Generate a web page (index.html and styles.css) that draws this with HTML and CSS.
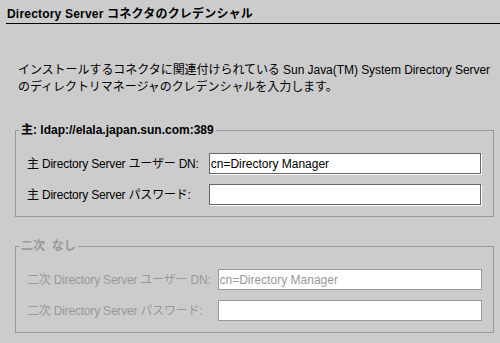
FILE: index.html
```html
<!DOCTYPE html>
<html lang="ja">
<head>
  <meta charset="UTF-8" />
  <title>Directory Server コネクタのクレデンシャル</title>
  <link rel="stylesheet" href="styles.css">
</head>
<body>

  <div class="header">
    <h1>Directory Server コネクタのクレデンシャル</h1>
  </div>

  <p class="intro">インストールするコネクタに関連付けられている Sun Java(TM) System Directory Server<br>のディレクトリマネージャのクレデンシャルを入力します。</p>

  <!-- primary server -->
  <fieldset class="group">
    <legend>主: ldap://elala.japan.sun.com:389</legend>
    <div class="form-grid">
      <label for="primary-dn">主 Directory Server ユーザー DN:</label>
      <input id="primary-dn" type="text" value="cn=Directory Manager">
      <label for="primary-pw">主 Directory Server パスワード:</label>
      <input id="primary-pw" type="password">
    </div>
  </fieldset>

  <!-- secondary server, nothing configured so it is greyed out -->
  <fieldset class="group second" disabled>
    <legend>二次&nbsp; なし</legend>
    <div class="form-grid">
      <label for="second-dn">二次 Directory Server ユーザー DN:</label>
      <input id="second-dn" type="text" value="cn=Directory Manager">
      <label for="second-pw">二次 Directory Server パスワード:</label>
      <input id="second-pw" type="password">
    </div>
  </fieldset>

</body>
</html>
```

FILE: styles.css
```css
body {
  margin: 0;
  background-color: #cccccc;
  color: #000;
  font-family: "Liberation Sans", "Noto Sans CJK JP", sans-serif;
  font-size: 12px;
  width: 500px;
  height: 343px;
  overflow: hidden;
}

.header {
  margin-left: 6px;
  padding: 6px 0 1px 1px;
  border-bottom: 1px solid #000;
}

h1 {
  margin: 0;
  font-size: 12px;
  font-weight: 700;
  line-height: 16px;
  letter-spacing: 0.2px;
}

.intro {
  margin: 38px 0 0;
  padding-left: 18px;
  line-height: 17px;
  letter-spacing: -0.05px;
}

.group {
  margin: 27px 6px 0 15px;
  padding: 16px 11px 11px;
  border: 1px solid #999;
  min-width: 0;
}

.group legend {
  margin-left: -8px;
  padding: 0 2px;
  font-weight: 700;
  line-height: 14px;
}

.form-grid {
  display: grid;
  grid-template-columns: auto 1fr;
  column-gap: 10px;
  row-gap: 10px;
  align-items: center;
}

.form-grid label {
  line-height: 14px;
  white-space: nowrap;
  letter-spacing: -0.2px;
}

.form-grid input {
  box-sizing: border-box;
  height: 21px;
  width: calc(100% - 1px);
  margin: 0;
  padding: 0 1px;
  border: 1px solid #666;
  border-radius: 0;
  box-shadow: 1px 1px 0 #fff;
  background: #fff;
  color: #000;
  font-family: inherit;
  font-size: 12px;
  outline: none;
}

/* Greyed out secondary block */
.second {
  margin-top: 22px;
  color: #999;
}

.second .form-grid {
  column-gap: 7px;
}

.second .form-grid input {
  border-color: #999;
  box-shadow: none;
  color: #999;
  -webkit-text-fill-color: #999;
  width: 100%;
}
```
